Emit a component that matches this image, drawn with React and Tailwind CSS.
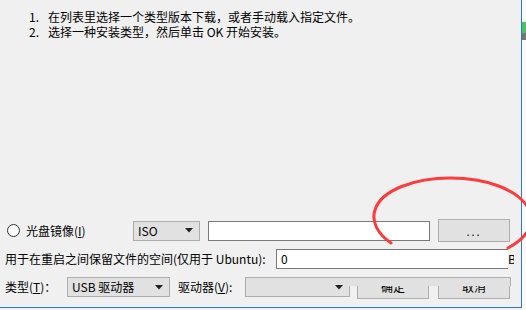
import React from "react";

function Arrow() {
  return (
    <svg width="8" height="5" viewBox="0 0 8 5" className="shrink-0">
      <path d="M0 0 H8 L4 4.5 Z" fill="#222" />
    </svg>
  );
}

function Select({ className, children }) {
  return (
    <div
      className={
        "flex items-center justify-between h-[20px] bg-[#e1e1e1] border border-[#adadad] pl-[4px] pr-[6px] " +
        className
      }
    >
      <span className="leading-[14px]">{children}</span>
      <Arrow />
    </div>
  );
}

export default function App() {
  return (
    <div className="relative w-[526px] h-[310px] overflow-hidden bg-[#f0f0f0] text-[12px] text-black font-['Noto_Sans_CJK_SC','Noto_Sans',sans-serif]">
      {/* window edge strip on the right */}
      <div className="absolute right-0 top-0 w-[4px] h-[310px] bg-[#f9f9f9]">
        <div className="mt-[22px] h-[11px] bg-[#4cbf6a]" />
        <div className="h-[7px] bg-[#6f7a72]" />
      </div>

      <div className="w-[522px] h-[308px] border-r border-b border-[#2b7bd6] flex flex-col">
        {/* instructions */}
        <div className="pt-[9px] pl-[29px] leading-[15px]">
          <div className="flex">
            <span className="w-[19px]">1.</span>
            <span>在列表里选择一个类型版本下载，或者手动载入指定文件。</span>
          </div>
          <div className="flex">
            <span className="w-[19px]">2.</span>
            <span>选择一种安装类型，然后单击 OK 开始安装。</span>
          </div>
        </div>

        {/* disc image row */}
        <div className="mt-[180px] h-[23px] flex items-center pl-[7px]">
          <div className="w-[13px] h-[13px] rounded-full border border-[#333] bg-white shrink-0" />
          <span className="ml-[6px] w-[107px] leading-[14px]">
            光盘镜像(<span className="underline">I</span>)
          </span>
          <Select className="w-[67px]">ISO</Select>
          <div className="ml-[8px] w-[222px] h-[20px] bg-white border border-[#7a7a7a]" />
          <button className="ml-[8px] w-[72px] h-[23px] bg-[#e1e1e1] border border-[#adadad] text-[11px] tracking-[2px] leading-[12px]">
            ...
          </button>
        </div>

        {/* persistence row */}
        <div className="mt-[7px] h-[20px] flex items-center pl-[5px]">
          <span className="w-[271px] leading-[14px] whitespace-nowrap">
            用于在重启之间保留文件的空间(仅用于 Ubuntu):
          </span>
          <div className="w-[232px] h-[20px] bg-white border border-r-0 border-[#7a7a7a] pl-[4px] flex items-center leading-[14px]">
            0
          </div>
          <span className="w-[6px] overflow-hidden leading-[14px]">B</span>
        </div>

        {/* type row */}
        <div className="relative mt-[8px] flex items-start pl-[5px]">
          <span className="w-[62px] h-[20px] flex items-center leading-[14px]">
            类型(<span className="underline">T</span>)：
          </span>
          <Select className="w-[103px]">USB 驱动器</Select>
          <span className="ml-[8px] w-[67px] h-[20px] flex items-center leading-[14px]">
            驱动器(<span className="underline">V</span>):
          </span>
          <Select className="w-[105px]" />
          <button className="ml-[7px] w-[72px] h-[22px] pb-[2px] bg-[#e1e1e1] border border-[#adadad] leading-[12px]">
            确定
          </button>
          <button className="ml-[9px] w-[72px] h-[22px] pb-[2px] bg-[#e1e1e1] border border-[#adadad] leading-[12px]">
            取消
          </button>
          {/* repaint glitch covering the upper half of the buttons */}
          <div className="absolute left-[349px] top-0 w-[162px] h-[9px] bg-[#e1e1e1] border-t border-r border-[#adadad]" />
        </div>
      </div>

      {/* hand drawn red circle */}
      <svg
        className="absolute left-0 top-0 pointer-events-none"
        width="526"
        height="310"
        viewBox="0 0 526 310"
      >
        <path
          d="M391 243 C378 234 371 222 375 210 C381 190 415 178 450 178 C488 178 516 190 527 206 C537 220 530 236 508 248"
          fill="none"
          stroke="#ff3b3b"
          strokeWidth="3"
          strokeLinecap="round"
        />
      </svg>
    </div>
  );
}
